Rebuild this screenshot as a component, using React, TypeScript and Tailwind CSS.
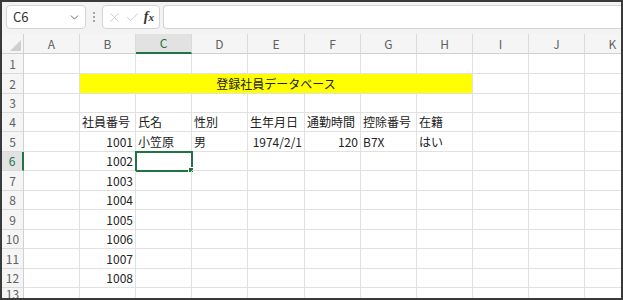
import { ChevronDown, X, Check } from 'lucide-react';

interface Col {
    key: string;
    w: number;
}

const cols: Col[] = [
    { key: 'A', w: 56 },
    { key: 'B', w: 56 },
    { key: 'C', w: 56 },
    { key: 'D', w: 56 },
    { key: 'E', w: 57 },
    { key: 'F', w: 56 },
    { key: 'G', w: 56 },
    { key: 'H', w: 56 },
    { key: 'I', w: 56 },
    { key: 'J', w: 56 },
    { key: 'K', w: 56 }
];

const rowHeights = [20, 20, 19, 19, 20, 19, 20, 19, 20, 19, 20, 19, 12];

type Cell = { v: string; right?: boolean };

const data: Record<string, Cell> = {
    B4: { v: '社員番号' },
    C4: { v: '氏名' },
    D4: { v: '性別' },
    E4: { v: '生年月日' },
    F4: { v: '通勤時間' },
    G4: { v: '控除番号' },
    H4: { v: '在籍' },
    B5: { v: '1001', right: true },
    C5: { v: '小笠原' },
    D5: { v: '男' },
    E5: { v: '1974/2/1', right: true },
    F5: { v: '120', right: true },
    G5: { v: 'B7X' },
    H5: { v: 'はい' },
    B6: { v: '1002', right: true },
    B7: { v: '1003', right: true },
    B8: { v: '1004', right: true },
    B9: { v: '1005', right: true },
    B10: { v: '1006', right: true },
    B11: { v: '1007', right: true },
    B12: { v: '1008', right: true }
};

const green = '#217346';

function FormulaBar() {
    return (
        <div className="h-[32px] flex items-start pt-[3px] pl-[4px] shrink-0">
            <div className="w-[80px] h-[24px] bg-white border border-[#d4d4d4] rounded-[4px] flex items-center justify-between pl-[6px] pr-[4px] text-[13px] text-[#333]">
                <span>C6</span>
                <ChevronDown size={13} strokeWidth={1.6} className="text-[#555]" />
            </div>
            <div className="w-[16px] h-[24px] flex flex-col items-center justify-center gap-[2px]">
                <span className="w-[2px] h-[2px] rounded-full bg-[#8a8a8a]" />
                <span className="w-[2px] h-[2px] rounded-full bg-[#8a8a8a]" />
                <span className="w-[2px] h-[2px] rounded-full bg-[#8a8a8a]" />
            </div>
            <div className="w-[58px] h-[24px] bg-white border border-[#d4d4d4] rounded-[4px] flex items-center justify-between px-[4px]">
                <X size={15} strokeWidth={1.2} className="text-[#bdbdbd]" />
                <Check size={15} strokeWidth={1.2} className="text-[#bdbdbd]" />
                <span className="text-[14px] italic font-semibold text-[#333] leading-none pr-[1px]" style={{ fontFamily: '"Liberation Serif", serif' }}>
                    f<span className="text-[11px]">x</span>
                </span>
            </div>
            <div className="flex-1 ml-[3px] h-[24px] bg-white border-y border-l border-[#d4d4d4] rounded-l-[4px]" />
        </div>
    );
}

function HeaderRow() {
    return (
        <div className="flex h-[20px] shrink-0 bg-[#f5f5f5]">
            <div className="w-[22px] h-full shrink-0 border-r border-b border-[#d0d0d0] relative">
                <svg className="absolute right-[2px] bottom-[2px]" width="11" height="11" viewBox="0 0 11 11">
                    <polygon points="11,0 11,11 0,11" fill="#cfcfcf" />
                </svg>
            </div>
            {cols.map((c) => {
                const sel = c.key === 'C';
                return (
                    <div
                        key={c.key}
                        style={{ width: c.w }}
                        className={
                            sel
                                ? 'shrink-0 h-full flex items-center justify-center text-[12px] border-r border-[#dadada] border-b-2 border-b-[#217346] bg-[#e2e2e2] text-[#217346]'
                                : 'shrink-0 h-full flex items-center justify-center text-[12px] border-r border-b border-[#dadada] border-b-[#d0d0d0] text-[#616161]'
                        }
                    >
                        {c.key}
                    </div>
                );
            })}
        </div>
    );
}

function GridRow({ r, h }: { r: number; h: number }) {
    const selRow = r === 6;
    return (
        <div className="flex shrink-0" style={{ height: h }}>
            <div
                className={
                    selRow
                        ? 'w-[22px] shrink-0 h-full flex items-center justify-center text-[12px] bg-[#e2e2e2] text-[#217346] border-b border-[#dadada] border-r-2 border-r-[#217346]'
                        : 'w-[22px] shrink-0 h-full flex items-center justify-center text-[12px] bg-[#f5f5f5] text-[#616161] border-b border-[#dadada] border-r border-r-[#d0d0d0]'
                }
            >
                {r}
            </div>
            {r === 2 ? (
                <>
                    <div style={{ width: cols[0].w }} className="shrink-0 h-full border-r border-b border-[#e1e1e1]" />
                    <div
                        style={{ width: cols.slice(1, 8).reduce((s, c) => s + c.w, 0) }}
                        className="shrink-0 h-full bg-[#ffff00] border-r border-b border-[#e1e1e1] flex items-center justify-center text-[12px] text-[#222]"
                    >
                        登録社員データベース
                    </div>
                    {cols.slice(8).map((c) => (
                        <div key={c.key} style={{ width: c.w }} className="shrink-0 h-full border-r border-b border-[#e1e1e1]" />
                    ))}
                </>
            ) : (
                cols.map((c) => {
                    const cell = data[`${c.key}${r}`];
                    const active = c.key === 'C' && r === 6;
                    return (
                        <div
                            key={c.key}
                            style={{ width: c.w }}
                            className={`shrink-0 h-full border-r border-b border-[#e1e1e1] relative flex items-center px-[2px] text-[12px] text-[#222] whitespace-nowrap ${cell?.right ? 'justify-end' : 'justify-start'}`}
                        >
                            {cell?.v}
                            {active && (
                                <>
                                    <div className="absolute -left-[1px] -top-[1px] w-[58px] h-[21px] border-2" style={{ borderColor: green }} />
                                    <div className="absolute -right-[3px] -bottom-[3px] w-[6px] h-[6px] border border-white" style={{ backgroundColor: green }} />
                                </>
                            )}
                        </div>
                    );
                })
            )}
        </div>
    );
}

export default function App() {
    return (
        <div
            className="w-[623px] h-[300px] overflow-hidden border-2 border-[#3a3a3a] bg-[#f3f3f3] flex flex-col"
            style={{ fontFamily: '"Noto Sans CJK JP", "Noto Sans", sans-serif' }}
        >
            <FormulaBar />
            <div className="flex-1 flex flex-col bg-white overflow-hidden">
                <HeaderRow />
                {rowHeights.map((h, i) => (
                    <GridRow key={i} r={i + 1} h={h} />
                ))}
            </div>
        </div>
    );
}
